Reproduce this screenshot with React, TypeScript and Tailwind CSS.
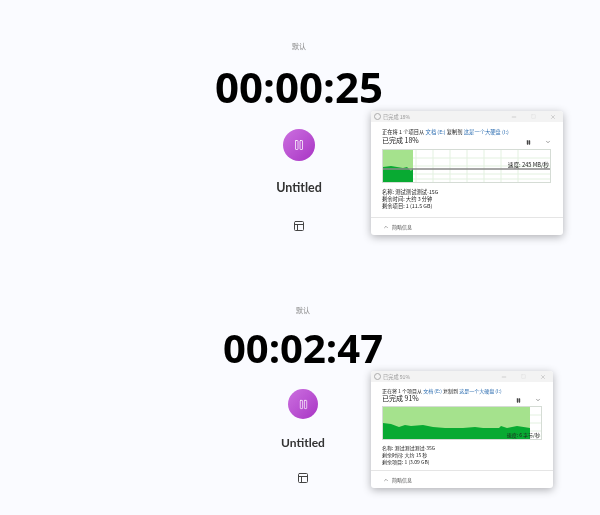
import React from 'react';
import { Layout, Pause, ChevronUp, Minus, Square, X, ChevronDown } from 'lucide-react';

const cjk = { fontFamily: '"Noto Sans CJK SC", sans-serif' };

type Dialog = {
  pct: string;
  name: string;
  left: string;
  items: string;
  speed: string;
  bodyClass: string;
  textClass: string;
  chartClass: string;
  speedClass: string;
  infoClass: string;
  fillW: number;
  lineY?: number;
  path: string;
};

const first: Dialog = {
  pct: '18%',
  name: '测试测试测试-15G',
  left: '大约 3 分钟',
  items: '1 (11.5 GB)',
  speed: '速度: 245 MB/秒',
  bodyClass: 'pt-[7px]',
  textClass: 'text-[5.3px]',
  chartClass: 'mt-[4px] w-[169px]',
  speedClass: 'top-[11px] right-[1px] text-[5.7px]',
  infoClass: 'mt-[6px]',
  fillW: 30,
  lineY: 19,
  path: 'M0 17 L8 16 L14 17 L20 18 L24 17 L28 21 L30 18 L30 34 L0 34 Z',
};

const second: Dialog = {
  pct: '91%',
  name: '测试测试测试-35G',
  left: '大约 15 秒',
  items: '1 (3.09 GB)',
  speed: '速度: 6 字节/秒',
  bodyClass: 'pt-[5px]',
  textClass: 'text-[5px]',
  chartClass: 'mt-[3px] w-[160px]',
  speedClass: 'top-[24px] right-[1px] text-[5px]',
  infoClass: 'mt-[4px]',
  fillW: 147,
  path: 'M0 16 L8 17 L16 20 L22 18 L28 19 L40 18 L50 20 L62 21 L80 21 L92 20 L100 21 L116 21 L118 19 L124 21 L134 19 L147 21 L147 34 L0 34 Z',
};

function CopyDialog({ d, className }: { d: Dialog; className: string }) {
  return (
    <div
      className={`absolute z-10 flex flex-col overflow-hidden rounded-[3px] bg-white leading-[7px] text-[#222] shadow-[0_2px_8px_rgba(0,0,0,0.3)] ${d.textClass} ${className}`}
      style={cjk}
    >
      <div className="flex h-[11px] shrink-0 items-center gap-[2px] bg-[#f3f3f3] pl-[3px] pr-[7px] text-[5.2px] text-[#999]">
        <div className="h-[7px] w-[7px] rounded-full border border-[#aaa]" />
        <span>已完成 {d.pct}</span>
        <div className="ml-auto flex items-center gap-[14px] text-[#aaa]">
          <Minus size={6} />
          <Square size={5} className="text-[#ddd]" />
          <X size={6} />
        </div>
      </div>
      <div className={`flex flex-1 flex-col px-[11px] ${d.bodyClass}`}>
        <div className="whitespace-nowrap">
          正在将 1 个项目从 <span className="text-[#2b6cb0]">文档 (E:)</span> 复制到{' '}
          <span className="text-[#2b6cb0]">这是一个大硬盘 (I:)</span>
        </div>
        <div className="flex h-[9px] items-center">
          <span className="text-[7px]">已完成 {d.pct}</span>
          <div className="ml-auto flex items-center gap-[14px] pr-[1px] pt-[3px] text-[#444]">
            <Pause size={5} fill="currentColor" />
            <ChevronDown size={6} />
          </div>
        </div>
        <div className={`relative h-[34px] shrink-0 border border-[#d5dcd5] bg-white ${d.chartClass}`}>
          <svg className="absolute inset-0 h-full w-full">
            {[16, 33, 50, 67, 84, 101, 118, 135].map((x) => (
              <line key={x} x1={x} x2={x} y1="0" y2="34" stroke="#e3f1e0" strokeWidth="1" />
            ))}
            {[8, 16, 24, 29].map((y) => (
              <line key={y} x1="0" x2="170" y1={y} y2={y} stroke="#e3f1e0" strokeWidth="1" />
            ))}
            <rect x="0" y="0" width={d.fillW} height="34" fill="#a5e28d" />
            <path d={d.path} fill="#08aa32" />
            {d.lineY !== undefined && (
              <line x1="0" x2="170" y1={d.lineY} y2={d.lineY} stroke="#8a8a8a" strokeWidth="1.3" />
            )}
          </svg>
          <span className={`absolute whitespace-nowrap text-[#222] ${d.speedClass}`}>
            {d.speed}
          </span>
        </div>
        <div className={`flex flex-col ${d.infoClass}`}>
          <div>名称: {d.name}</div>
          <div>剩余时间: {d.left}</div>
          <div>剩余项目: {d.items}</div>
        </div>
      </div>
      <div className="flex h-[18px] shrink-0 items-center gap-[3px] border-t border-[#e5e5e5] px-[12px] text-[5px] text-[#555]">
        <ChevronUp size={6} />
        <span>简略信息</span>
      </div>
    </div>
  );
}

function TimerBlock({
  time,
  dialog,
  size,
  className,
  dialogClass,
}: {
  time: string;
  dialog: Dialog;
  size: 'lg' | 'sm';
  className: string;
  dialogClass: string;
}) {
  const lg = size === 'lg';
  return (
    <section className={`relative flex flex-col items-center ${className}`}>
      <div className="text-[7px] leading-[10px] text-[#888]" style={cjk}>
        默认
      </div>
      <div
        className={`font-bold text-black ${
          lg ? 'mt-[7px] text-[42px] leading-[58px]' : 'mt-[6px] text-[40px] leading-[54px]'
        }`}
        style={{ fontFamily: '"Open Sans", sans-serif' }}
      >
        {time}
      </div>
      <div
        className={`flex items-center justify-center rounded-full bg-gradient-to-br from-[#cc6fe0] to-[#a832c4] text-white ${
          lg ? 'mt-[13px] h-8 w-8' : 'mt-[14px] h-[30px] w-[30px]'
        }`}
      >
        <Pause size={lg ? 12 : 11} strokeWidth={1.5} />
      </div>
      <div
        className={`font-bold text-[#333] leading-[18px] ${lg ? 'mt-[18px] text-[12.5px]' : 'mt-[15px] text-[12px]'}`}
        style={{ fontFamily: 'Lato, sans-serif' }}
      >
        Untitled
      </div>
      <Layout size={12} className={`text-[#444] ${lg ? 'mt-[23px]' : 'mt-[20px]'}`} />
      <CopyDialog d={dialog} className={dialogClass} />
    </section>
  );
}

export default function App() {
  return (
    <div className="relative h-[515px] w-[600px] overflow-hidden bg-[#fafbff] blur-[0.4px]">
      <div className="flex flex-col items-start pt-[41px]">
        <TimerBlock
          time="00:00:25"
          dialog={first}
          size="lg"
          className="ml-[199px] w-[200px]"
          dialogClass="left-[172px] top-[70px] h-[124px] w-[192px]"
        />
        <TimerBlock
          time="00:02:47"
          dialog={second}
          size="sm"
          className="ml-[203px] mt-[73px] w-[200px]"
          dialogClass="left-[168px] top-[66px] h-[117px] w-[182px]"
        />
      </div>
    </div>
  );
}
